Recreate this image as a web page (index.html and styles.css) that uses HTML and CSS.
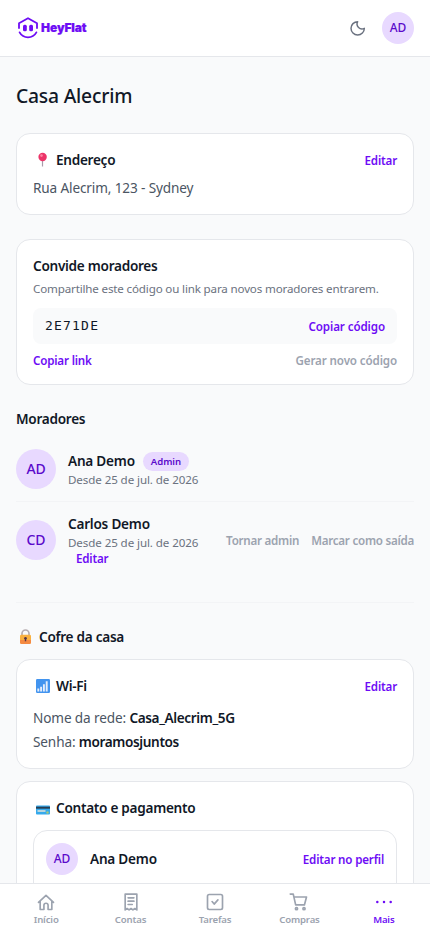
FILE: index.html
```html
<!DOCTYPE html>
<html lang="pt-BR">
<head>
<meta charset="utf-8">
<meta name="viewport" content="width=device-width, initial-scale=1">
<title>HeyFlat</title>
<link rel="stylesheet" href="styles.css">
</head>
<body>
<header class="topbar">
  <div class="brand">
    <svg class="brand-mark" width="20" height="22" viewBox="0 0 20 22" fill="none" stroke="currentColor" stroke-width="1.8" stroke-linecap="round" stroke-linejoin="round"><path d="M1 11V6.300L10 1.200l9 5.100V11M1.600 15.400c3.700 6.600 13.100 6.600 16.800 0"/><g fill="currentColor" stroke="none"><rect x="5" y="7.800" width="3.800" height="6.400" rx="1.500"/><rect x="11.200" y="7.800" width="3.800" height="6.400" rx="1.500"/></g></svg>
    <span class="brand-name">HeyFlat</span>
  </div>
  <div class="top-actions">
    <svg width="16" height="16" viewBox="0 0 24 24" fill="none" stroke="#6b7280" stroke-width="2.2" stroke-linecap="round" stroke-linejoin="round"><path d="M11.500 2.500a7.400 7.400 0 0 0 10 10A10 10 0 1 1 11.500 2.500z"/></svg>
    <span class="avatar small">AD</span>
  </div>
</header>
<main>
  <h1>Casa Alecrim</h1>
  <section class="card address">
    <div class="row"><h2><svg class="emoji" width="20" height="20" viewBox="0 0 20 20"><path d="M9.500 10v6.500" stroke="#a99baa" stroke-width="1.200"/><circle cx="9.600" cy="7" r="4.200" fill="#ec3468"/><circle cx="8.500" cy="5.600" r="1.300" fill="#ff82a2"/></svg>Endereço</h2><a class="link">Editar</a></div>
    <p class="body-text">Rua Alecrim, 123 - Sydney</p>
  </section>
  <section class="card invite">
    <h2>Convide moradores</h2>
    <p class="caption">Compartilhe este código ou link para novos moradores entrarem.</p>
    <div class="code-box"><code>2E71DE</code><a class="link">Copiar código</a></div>
    <div class="row invite-links"><a class="link">Copiar link</a><a class="link muted">Gerar novo código</a></div>
  </section>
  <section class="members">
    <h2>Moradores</h2>
    <div class="member">
      <span class="avatar">AD</span>
      <div class="member-info"><div class="name">Ana Demo<span class="badge">Admin</span></div><div class="since">Desde 25 de jul. de 2026</div></div>
    </div>
    <div class="member">
      <span class="avatar">CD</span>
      <div class="member-info"><div class="name">Carlos Demo</div><div class="since">Desde 25 de jul. de 2026</div><a class="link edit-since">Editar</a></div>
      <div class="member-actions"><a class="link muted">Tornar admin</a><a class="link muted">Marcar como saída</a></div>
    </div>
  </section>
  <section class="vault">
    <h2 class="vault-title"><svg class="emoji" width="20" height="20" viewBox="0 0 20 20"><path d="M6 9V6.500a3.500 3.500 0 0 1 7 0V9" fill="none" stroke="#b6adb0" stroke-width="1.700"/><rect x="4" y="7.800" width="11" height="9.200" rx="1.400" fill="#f9b03f"/><path d="M4 13h11v2.600a1.400 1.400 0 0 1-1.400 1.400H5.400A1.400 1.400 0 0 1 4 15.600z" fill="#f58a42"/><path d="M9.500 11v3.300" stroke="#553548" stroke-width="1.400"/><circle cx="9.500" cy="11.200" r="1.300" fill="#553548"/></svg>Cofre da casa</h2>
    <div class="card wifi">
      <div class="row"><h2><svg class="emoji" width="20" height="20" viewBox="0 0 20 20"><rect x="3" y="3" width="14" height="14" rx="1.200" fill="#4294ef"/><path d="M5.300 15.500v-3M8.100 15.500V10.800M10.900 15.500V8.300M13.700 15.500V5.200" stroke="#e5eefc" stroke-width="1.900"/></svg>Wi-Fi</h2><a class="link">Editar</a></div>
      <p class="body-text">Nome da rede: <strong>Casa_Alecrim_5G</strong></p>
      <p class="body-text">Senha: <strong>moramosjuntos</strong></p>
    </div>
    <div class="card contact">
      <h2><svg class="emoji" width="20" height="20" viewBox="0 0 20 20"><rect x="3" y="7.500" width="14" height="9" rx=".9" fill="#35a9ec"/><path d="M3 8.700h14v2H3z" fill="#283e52"/><path d="M4.500 12h8v2h-8z" fill="#b7d5df"/><circle cx="14.500" cy="14.500" r="1.200" fill="#a6c77a"/></svg>Contato e pagamento</h2>
      <div class="person"><span class="avatar small">AD</span><span class="name">Ana Demo</span><a class="link">Editar no perfil</a></div>
    </div>
  </section>
</main>
<nav class="tabs">
  <a class="tab"><svg viewBox="0 0 24 24"><path d="M3 12.500 12 4l9 8.500M5 11v10h4.500v-5a2.500 2.500 0 0 1 5 0v5H19V11"/></svg>Início</a>
  <a class="tab"><svg viewBox="0 0 24 24"><path d="M5 2.500h14v19l-2.300-1.700-2.400 1.700L12 19.800l-2.300 1.700-2.400-1.700L5 21.500zM8.500 7h7M8.500 11h7M8.500 15h5"/></svg>Contas</a>
  <a class="tab"><svg viewBox="0 0 24 24"><rect x="3" y="3" width="18" height="18" rx="2"/><path d="m8.500 11.500 2.500 3 4.500-5"/></svg>Tarefas</a>
  <a class="tab"><svg viewBox="0 0 24 24"><path d="M1.500 2.500h3.600l2.900 13h10.500L21 6H6"/><circle cx="9" cy="20" r="1.300"/><circle cx="18" cy="20" r="1.300"/></svg>Compras</a>
  <a class="tab active"><svg viewBox="0 0 24 24"><g fill="currentColor" stroke="none"><circle cx="4" cy="12" r="1.500"/><circle cx="12" cy="12" r="1.500"/><circle cx="20" cy="12" r="1.500"/></g></svg>Mais</a>
</nav>
</body>
</html>
```
FILE: styles.css
```css
* { box-sizing: border-box; }
html, body { margin: 0; height: 100%; overflow: hidden; }
body {
  display: flex; flex-direction: column;
  background: #f9fafb; color: #111827;
  font-family: "Noto Sans", "Open Sans", sans-serif;
  font-size: 13.6px; line-height: 20px; letter-spacing: -0.13px;
}
h1, h2, p { margin: 0; }
.topbar {
  flex: 0 0 57px; display: flex; align-items: center; justify-content: space-between;
  padding: 0 16px; background: #fff; border-bottom: 1px solid #e5e7eb;
}
.brand { display: flex; align-items: center; gap: 3px; padding-left: 2px; color: #6d0cf5; }
.brand-name { font: 900 12px/20px Inter, sans-serif; letter-spacing: -0.1px; -webkit-text-stroke: 0.2px currentColor; }
.top-actions { display: flex; align-items: center; gap: 16px; }
.avatar {
  flex: none; display: flex; align-items: center; justify-content: center;
  width: 40px; height: 40px; border-radius: 50%;
  background: #e8d9ff; color: #5b0acb; font-size: 14px; font-weight: 500;
}
.avatar.small { width: 32px; height: 32px; font-size: 12px; letter-spacing: -0.1px; }
main { flex: 1; min-height: 0; overflow: hidden; padding: 24px 16px 0; }
h1 { font-size: 19.3px; line-height: 28px; font-weight: 550; letter-spacing: -0.2px; padding-top: 1px; margin-bottom: 23px; }
h2 { display: flex; align-items: center; font-size: 13.6px; line-height: 20px; font-weight: 600; letter-spacing: -0.28px; }
.emoji { flex: none; margin-right: 3px; }
.row { display: flex; align-items: center; justify-content: space-between; }
.card { background: #fff; border: 1px solid #e5e7eb; border-radius: 14px; padding: 16px; }
.link { color: #6d0cf5; font-size: 11.6px; line-height: 16px; font-weight: 600; letter-spacing: -0.18px; white-space: nowrap; padding-top: 1px; margin-bottom: -1px; }
.link.muted { color: #9ca3af; letter-spacing: -0.12px; }
.body-text { color: #4b5563; white-space: nowrap; }
.body-text strong { color: #111827; font-weight: 600; letter-spacing: -0.38px; }
.address .body-text { margin-top: 8px; }
.invite { margin-top: 24px; }
.caption { margin-top: 4px; padding-top: 1px; margin-bottom: -1px; color: #6b7280; font-size: 11.6px; line-height: 16px; letter-spacing: -0.16px; white-space: nowrap; }
.code-box {
  display: flex; align-items: center; justify-content: space-between;
  height: 36px; margin-top: 12px; padding: 0 12px; background: #f9fafb; border-radius: 8px;
}
.code-box .link { letter-spacing: -0.1px; }
code { font: 13px/20px "DejaVu Sans Mono", monospace; letter-spacing: 1.2px; }
.invite-links { margin-top: 8px; }
.members { margin-top: 24px; padding-bottom: 24px; border-bottom: 1px solid #f3f4f6; }
.members > h2 { margin-bottom: 8px; }
.member { display: flex; align-items: center; gap: 12px; padding: 12px 0; }
.member + .member { border-top: 1px solid #f3f4f6; }
.member-info { white-space: nowrap; }
.name { display: flex; align-items: center; font-weight: 600; letter-spacing: -0.23px; }
.badge {
  margin-left: 8px; padding: 0 8px; border-radius: 10px; background: #e8d9ff;
  color: #5b0acb; font-size: 9.6px; line-height: 19px; letter-spacing: -0.05px;
}
.since { padding-top: 1px; margin-bottom: -1px; color: #6b7280; font-size: 11.6px; line-height: 16px; letter-spacing: -0.1px; }
.edit-since { display: block; margin-left: 8px; }
.member-actions { display: flex; gap: 12px; margin-left: auto; }
.member-actions .link { letter-spacing: -0.25px; }
.vault { padding-top: 24px; }
.vault-title { margin-bottom: 12px; }
.wifi .row { margin-bottom: 12px; }
.wifi .body-text + .body-text { margin-top: 4px; }
.contact { margin-top: 12px; height: 180px; }
.person {
  display: flex; align-items: center; margin-top: 12px; padding: 12px;
  border: 1px solid #e5e7eb; border-radius: 14px 14px 0 0; height: 58px;
}
.person .name { margin-left: 12px; }
.person .link { margin-left: auto; }
.tabs {
  flex: 0 0 49px; display: flex; padding: 8px 4px 0;
  background: #fff; border-top: 1px solid #e5e7eb;
}
.tab {
  flex: 1; display: flex; flex-direction: column; align-items: center;
  color: #9ca3af; font-size: 9.6px; line-height: 15px; font-weight: 600; letter-spacing: -0.15px;
}
.tab svg { width: 20px; height: 20px; fill: none; stroke: currentColor; stroke-width: 2; stroke-linecap: round; stroke-linejoin: round; }
.tab.active { color: #6d0cf5; }
```
